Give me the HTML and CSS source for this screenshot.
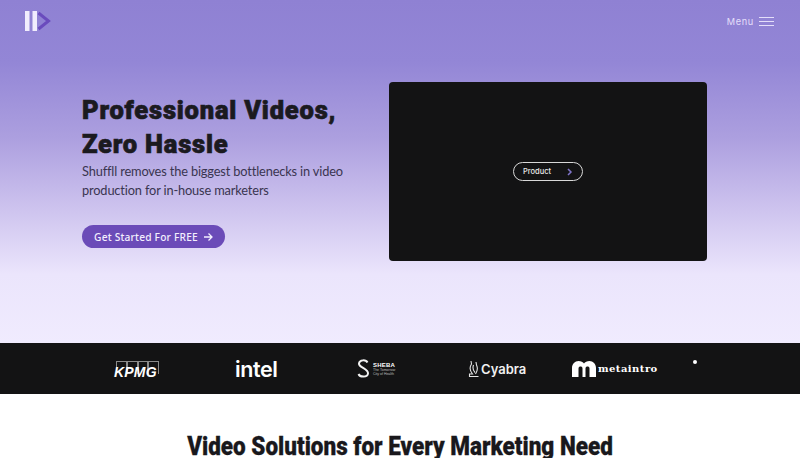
FILE: index.html
```html
<!DOCTYPE html>
<html lang="en">
<head>
<meta charset="utf-8">
<title>Shuffll</title>
<link rel="stylesheet" href="styles.css">
</head>
<body>
<section class="hero">
  <header class="topbar">
    <svg class="logo" width="26" height="20" viewBox="0 0 26 20">
      <rect x="0" y="0" width="4.500" height="20" fill="#f1edfd"/>
      <rect x="7.500" y="0" width="4.500" height="20" fill="#f1edfd"/>
      <path d="M13.500 2 L23.500 10 L13.500 18" fill="none" stroke="#6a4bbd" stroke-width="3"/>
    </svg>
    <div class="menu">
      <span class="menu-label">Menu</span>
      <svg width="15" height="10" viewBox="0 0 15 10"><path d="M0 .5H15M0 4.500H15M0 8.500H15" stroke="#e4defa" stroke-width="1"/></svg>
    </div>
  </header>
  <div class="hero-body">
    <div class="copy">
      <h1>Professional Videos,<br>Zero Hassle</h1>
      <p>Shuffll removes the biggest bottlenecks in video production for in-house marketers</p>
      <a class="cta">Get Started For FREE
        <svg width="10" height="10" viewBox="0 0 10 10"><path d="M1 5H9M5.500 1.500L9 5L5.500 8.500" fill="none" stroke="#f3effe" stroke-width="1.300"/></svg>
      </a>
    </div>
    <div class="video">
      <div class="pill"><span>Product</span>
        <svg width="7" height="8" viewBox="0 0 7 8"><path d="M2 1L5 4L2 7" fill="none" stroke="#7f74c8" stroke-width="1.500"/></svg>
      </div>
    </div>
  </div>
</section>
<section class="logos">
  <div class="kpmg">
    <div class="kpmg-boxes"><i></i><i></i><i></i><i></i></div>
    <span>KPMG</span>
  </div>
  <div class="intel">intel</div>
  <div class="sheba">
    <svg width="13" height="19" viewBox="0 0 13 19"><path d="M10.500 3.500C9 .5 2.500 .5 2 4.500C1.500 8.500 11.500 9.500 11 14.500C10.500 18.500 3 18.500 1.500 15" fill="none" stroke="#f2f2f2" stroke-width="2"/></svg>
    <div class="sheba-text"><b>SHEBA</b><small>The Tomorrow<br>City of Health</small></div>
  </div>
  <div class="cyabra">
    <svg width="12" height="18" viewBox="0 0 12 18"><path d="M3 1L3.500 4C1.500 7 2 11 4.500 14H1.500V16.500H10.500M8 2L8.500 5C10 8 9.500 11 7.500 14M5.500 5C4.500 8 5 10.500 7 12.500" fill="none" stroke="#e4e4e4" stroke-width="1.100"/></svg>
    <span>Cyabra</span>
  </div>
  <div class="metaintro">
    <svg width="24" height="16" viewBox="0 0 24 16"><path d="M0 16V7C0 3 3 0 6.500 0C9 0 11 1 12 2.500C13 1 15 0 17.500 0C21 0 24 3 24 7V16H17.500V7.500C17.500 6 16.500 5.500 15.500 5.500C14.500 5.500 13.500 6 13.500 7.500V16H10.500V7.500C10.500 6 9.500 5.500 8.500 5.500C7.500 5.500 6.500 6 6.500 7.500V16Z" fill="#fff"/></svg>
    <span>metaintro</span>
  </div>
  <i class="dot"></i>
</section>
<section class="solutions">
  <h2>Video Solutions for Every Marketing Need</h2>
</section>
</body>
</html>
```
FILE: styles.css
```css
* { box-sizing: border-box; }
html, body { margin: 0; height: 458px; overflow: hidden; }
body { background: #fff; font-family: "Inter", "Liberation Sans", sans-serif; }

.hero {
  height: 343px;
  background: linear-gradient(180deg, #8f81d3 0%, #9386d6 18%, #ac9fdf 40%, #cfc5ef 62%, #ebe5fc 80%, #f0ebfe 100%);
  display: flex;
  flex-direction: column;
}
.topbar {
  height: 82px;
  padding: 11px 26px 0 25px;
  display: flex;
  justify-content: space-between;
  align-items: flex-start;
}
.menu { display: flex; align-items: center; gap: 5px; padding-top: 5px; }
.menu-label { font-size: 9.200px; letter-spacing: .7px; color: #e4defa; }

.hero-body {
  display: flex;
  padding: 0 93px 0 82px;
  justify-content: space-between;
}
.copy { width: 290px; padding-top: 11px; }
h1 {
  margin: 0;
  font-family: "Roboto", "Liberation Sans", sans-serif;
  font-weight: 900;
  font-size: 25.500px;
  line-height: 34px;
  letter-spacing: .8px;
  color: #1b1a1f;
  white-space: nowrap;
  -webkit-text-stroke: .7px #1b1a1f;
}
.copy p {
  margin: 1px 0 0;
  font-family: "Lato", sans-serif;
  font-size: 12.800px;
  letter-spacing: -.15px;
  line-height: 19px;
  color: #3a3550;
}
.cta {
  margin-top: 25px;
  width: 143px;
  height: 23px;
  border-radius: 12px;
  background: #6b4bb8;
  color: #f3effe;
  font-family: "Noto Sans", sans-serif;
  font-size: 10.200px;
  font-weight: 500;
  letter-spacing: .2px;
  display: flex;
  align-items: center;
  justify-content: center;
  gap: 5px;
}
.video {
  width: 318px;
  height: 179px;
  background: #131314;
  border-radius: 4px;
  display: flex;
  align-items: center;
  justify-content: center;
}
.pill {
  width: 70px;
  height: 19px;
  border: 1.500px solid #d8d8d8;
  border-radius: 10px;
  display: flex;
  align-items: center;
  justify-content: space-between;
  padding: 0 9px;
  color: #e8e8e8;
  font-family: "Inter", sans-serif;
  font-size: 7.500px;
  font-weight: 500;
}

.logos {
  position: relative;
  height: 51px;
  background: #131314;
  display: flex;
  align-items: center;
  padding-left: 114px;
  color: #fff;
}
.kpmg { width: 45px; height: 20px; position: relative; margin-right: 76px; }
.kpmg-boxes { display: flex; padding-left: 2px; padding-top: 2px; }
.kpmg-boxes i { width: 11px; height: 13px; border: 1px solid #8a8a8a; border-bottom: 0; }
.kpmg span {
  position: absolute;
  left: 0;
  top: 5px;
  font: italic 700 14px "Liberation Sans", sans-serif;
  letter-spacing: .2px;
  line-height: 16px;
}
.intel {
  font-family: "Inter", sans-serif;
  font-size: 21.500px;
  font-weight: 600;
  letter-spacing: -.4px;
  width: 122px;
}
.sheba { display: flex; align-items: center; gap: 3px; width: 111px; }
.sheba-text { display: flex; flex-direction: column; font-family: "Liberation Sans", sans-serif; line-height: 1; }
.sheba-text b { font-size: 6px; letter-spacing: .2px; }
.sheba-text small { font-size: 3.500px; color: #bbb; line-height: 4px; }
.cyabra { display: flex; align-items: center; gap: 1px; width: 104px; }
.cyabra span { font-family: "Inter", sans-serif; font-size: 13px; font-weight: 600; color: #f0f0f0; }
.metaintro { display: flex; align-items: center; gap: 2px; }
.metaintro span {
  font-family: "DejaVu Serif", serif;
  font-size: 10px;
  font-weight: 700;
  letter-spacing: .45px;
}
.dot {
  position: absolute;
  left: 693px;
  top: 17px;
  width: 4px;
  height: 4px;
  border-radius: 50%;
  background: #fff;
}

.solutions { padding-top: 37px; text-align: center; }
h2 {
  margin: 0;
  font-family: "Roboto", "Liberation Sans", sans-serif;
  font-weight: 900;
  font-size: 26px;
  line-height: 30px;
  color: #19181c;
  white-space: nowrap;
  transform: scaleX(.865);
  -webkit-text-stroke: .3px #19181c;
}
```
